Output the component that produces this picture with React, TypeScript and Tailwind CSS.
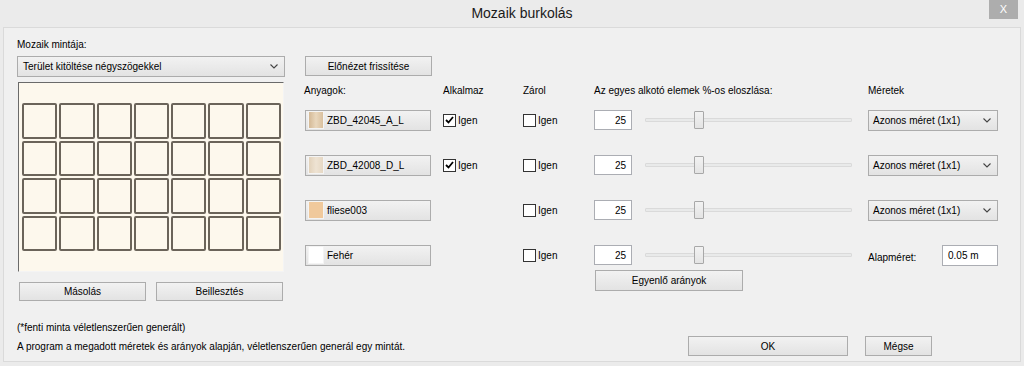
import React from "react";

const Chevron = () => (
  <svg width="8" height="5" viewBox="0 0 8 5" className="shrink-0">
    <path d="M0.5 0.5 L4 4 L7.5 0.5" fill="none" stroke="#444" strokeWidth="1.1" />
  </svg>
);

const CheckBox = ({ checked }: { checked?: boolean }) => (
  <div className="w-[13px] h-[13px] border border-[#333] bg-white flex items-center justify-center shrink-0">
    {checked && (
      <svg width="9" height="8" viewBox="0 0 9 8">
        <path d="M1 4 L3.5 6.5 L8 1" fill="none" stroke="#000" strokeWidth="1.8" />
      </svg>
    )}
  </div>
);

const Btn = ({ children, className }: { children: React.ReactNode; className?: string }) => (
  <div
    className={
      "border border-[#acacac] bg-linear-to-b from-[#f2f2f2] to-[#e3e3e3] flex items-center justify-center text-black " +
      (className ?? "")
    }
  >
    {children}
  </div>
);

const Combo = ({ text, className }: { text: string; className?: string }) => (
  <div
    className={
      "border border-[#acacac] bg-linear-to-b from-[#f2f2f2] to-[#e3e3e3] flex items-center justify-between pl-[4px] pr-[6px] " +
      (className ?? "")
    }
  >
    <span>{text}</span>
    <Chevron />
  </div>
);

const Slider = () => (
  <div className="relative ml-[13px] w-[207px] h-[22px] flex items-center">
    <div className="w-full h-[4px] bg-[#e9eaea] border border-[#dadada] rounded-[1px]" />
    <div className="absolute left-[49px] top-[2px] w-[10px] h-[18px] bg-linear-to-b from-[#f2f2f2] to-[#e4e4e4] border border-[#a8a8a8] rounded-[1px]" />
  </div>
);

const materials = [
  { name: "ZBD_42045_A_L", swatch: "bg-linear-to-r from-[#d4b996] via-[#e9d7bd] to-[#d9c09e]", apply: true },
  { name: "ZBD_42008_D_L", swatch: "bg-linear-to-r from-[#e2d2bb] via-[#eee3d3] to-[#e6d8c4]", apply: true },
  { name: "fliese003", swatch: "bg-[#f0c99c]", apply: null },
  { name: "Fehér", swatch: "bg-white", apply: null },
];

export default function App() {
  return (
    <div className="w-[1024px] h-[366px] bg-[#ebebeb] flex flex-col overflow-hidden font-['Liberation_Sans',Arial,sans-serif] text-[10px] text-black">
      {/* Title bar */}
      <div className="h-[27px] relative flex items-center justify-center pl-[20px] shrink-0">
        <span className="text-[14px] text-[#1a1a1a]">Mozaik burkolás</span>
        <div className="absolute right-[6px] top-0 w-[29px] h-[19px] bg-[#adadad] text-white text-[11px] flex items-center justify-center">
          X
        </div>
      </div>

      {/* Client area */}
      <div className="flex-1 mx-[3px] mb-[4px] border border-[#dadada] bg-[#f0f0f0] flex flex-col">
        <div className="flex pl-[13px] pt-[10px]">
          {/* Left column */}
          <div className="w-[268px] flex flex-col">
            <div className="h-[14px] leading-[14px]">Mozaik mintája:</div>
            <Combo text="Terület kitöltése négyszögekkel" className="mt-[4px] h-[21px] pl-[5px]" />
            <div className="mt-[5px] ml-[1px] w-[266px] h-[190px] bg-[#fdf8ed] border-l border-t border-[#6a6a6a] border-r border-b border-r-[#f4f4f4] border-b-[#f4f4f4] pt-[20px] pl-[3px]">
              <div className="grid grid-cols-7 gap-x-[2px] gap-y-[2px] w-[259px]">
                {Array.from({ length: 28 }).map((_, i) => (
                  <div
                    key={i}
                    className="h-[35.5px] border-2 border-[#6b645a] rounded-[2px] bg-[#fdf8ed]"
                  />
                ))}
              </div>
            </div>
            <div className="mt-[10px] ml-[2px] flex gap-[10px]">
              <Btn className="w-[127px] h-[19px]">Másolás</Btn>
              <Btn className="w-[127px] h-[19px]">Beillesztés</Btn>
            </div>
          </div>

          {/* Right column */}
          <div className="ml-[20px] flex flex-col">
            <Btn className="mt-[18px] w-[127px] h-[20px]">Előnézet frissítése</Btn>

            <div className="mt-[8px] h-[14px] leading-[14px] flex">
              <div className="w-[138px] -ml-[1px]">Anyagok:</div>
              <div className="w-[80px] ml-[1px]">Alkalmaz</div>
              <div className="w-[71px]">Zárol</div>
              <div className="w-[274px]">Az egyes alkotó elemek %-os eloszlása:</div>
              <div className="w-[130px]">Méretek</div>
            </div>

            <div className="mt-[11px] flex flex-col gap-[23px]">
              {materials.map((m, i) => (
                <div key={i} className="h-[22px] flex items-center">
                  <div className="w-[138px]">
                    <Btn className="w-[126px] h-[21px] !justify-start pl-[2px]">
                      <div className={"w-[16px] h-[18px] border border-[#f4f4f4] " + m.swatch} />
                      <span className="ml-[3px]">{m.name}</span>
                    </Btn>
                  </div>
                  <div className="w-[80px] flex items-center gap-[2px]">
                    {m.apply !== null && (
                      <>
                        <CheckBox checked={m.apply} />
                        <span>Igen</span>
                      </>
                    )}
                  </div>
                  <div className="w-[71px] flex items-center gap-[2px]">
                    <CheckBox />
                    <span>Igen</span>
                  </div>
                  <div className="w-[274px] flex items-center">
                    <div className="w-[38px] h-[20px] bg-white border border-[#abadb3] flex items-center justify-end pr-[5px]">
                      25
                    </div>
                    <Slider />
                  </div>
                  <div className="w-[130px] flex items-center">
                    {i < 3 ? (
                      <Combo text="Azonos méret (1x1)" className="w-[130px] h-[21px]" />
                    ) : (
                      <>
                        <span className="w-[74px] pt-[5px]">Alapméret:</span>
                        <div className="w-[56px] h-[21px] bg-white border border-[#abadb3] pl-[5px] pt-[2px]">
                          0.05 m
                        </div>
                      </>
                    )}
                  </div>
                </div>
              ))}
            </div>

            <div className="flex">
              <div className="w-[289px]" />
              <Btn className="mt-[4px] ml-[1px] w-[148px] h-[21px]">Egyenlő arányok</Btn>
            </div>
          </div>
        </div>

        {/* Bottom */}
        <div className="mt-auto flex items-end pl-[13px] pr-[88px] pb-[5px]">
          <div className="flex-1 flex flex-col gap-[5px] mb-[2px]">
            <div className="h-[14px] leading-[14px]">(*fenti minta véletlenszerűen generált)</div>
            <div className="h-[14px] leading-[14px]">
              A program a megadott méretek és arányok alapján, véletlenszerűen generál egy mintát.
            </div>
          </div>
          <Btn className="w-[160px] h-[20px]">OK</Btn>
          <Btn className="ml-[17px] w-[67px] h-[20px]">Mégse</Btn>
        </div>
      </div>
    </div>
  );
}
